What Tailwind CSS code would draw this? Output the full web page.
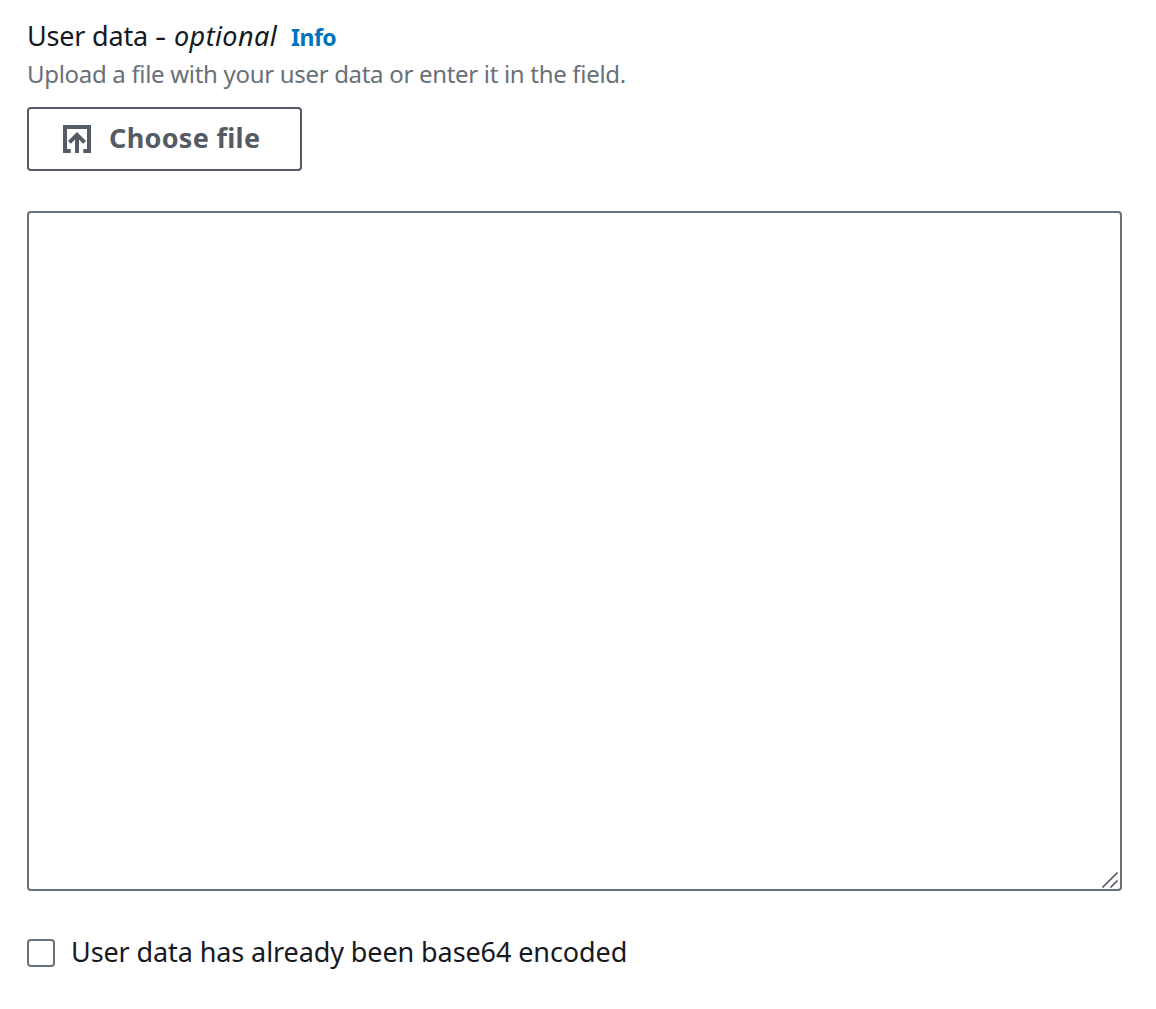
<!DOCTYPE html>
<html lang="en">
<head>
<meta charset="utf-8">
<title>User data</title>
<script src="https://cdn.jsdelivr.net/npm/@tailwindcss/browser@4"></script>
</head>
<body class="bg-white font-['Noto_Sans',sans-serif] text-[#16191f]">
<main class="flex h-[1009px] w-[1156px] flex-col items-start pl-[27px] pt-4">
  <div class="flex h-10 items-baseline whitespace-nowrap text-[27px] leading-10">
    <label for="data" class="flex w-[264px] items-baseline"><span class="w-[128px] tracking-[-0.2px]">User data</span><span class="w-[19px]"><span class="inline-block origin-left scale-x-130">-</span></span><i class="tracking-[0.4px]">optional</i></label>
    <a class="text-[23px] font-bold tracking-[-0.5px] text-[#0073bb]">Info</a>
  </div>
  <p class="h-[51px] whitespace-nowrap text-[24px] leading-[36px] tracking-[-0.31px] text-[#687078]">Upload a file with your user data or enter it in the field.</p>
  <button class="flex h-16 w-[275px] items-center rounded-[4px] border-2 border-[#545b64] pl-[34px] text-[#545b64]">
    <svg class="mr-[18px] size-7 shrink-0" viewBox="0 0 28 28" fill="none" stroke="currentColor" stroke-width="4"><path d="M7.7 26H2V2h24v24h-5.7M14 28V10M6.4 17.4l7.6-7.6 7.6 7.6"/></svg>
    <span class="mb-[2px] whitespace-nowrap text-[27px] font-bold leading-10 tracking-[0.3px]">Choose file</span>
  </button>
  <div class="relative mt-10">
    <textarea id="data" class="block h-[680px] w-[1095px] resize-none rounded-[4px] border-2 border-[#687078]"></textarea>
    <svg class="absolute bottom-[2px] right-[2px] size-[18px]" viewBox="0 0 18 18" fill="none" stroke="#545b64" stroke-width="1.7"><path d="M0.5 16.5L15.5 1.5M8.5 16.5l7-7"/></svg>
  </div>
  <label class="mt-[41px] flex h-10 items-center">
    <input type="checkbox" class="mr-4 mt-[2px] size-7 appearance-none rounded-[4px] border-2 border-[#687078]">
    <span class="whitespace-nowrap text-[27px] leading-10 tracking-[-0.1px]">User data has already been base64 encoded</span>
  </label>
</main>
</body>
</html>
